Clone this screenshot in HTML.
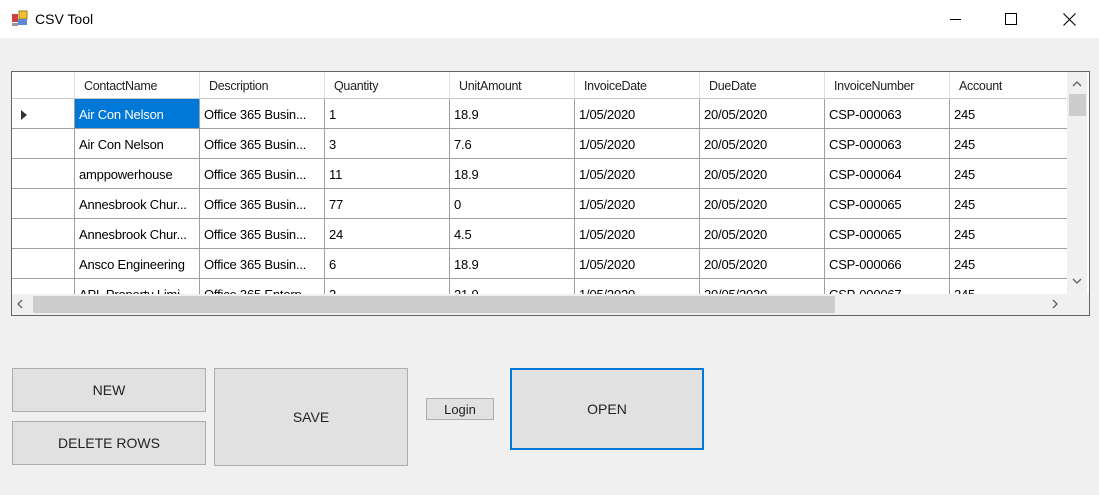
<!DOCTYPE html>
<html><head><style>
*{margin:0;padding:0;box-sizing:border-box}
body{width:1099px;height:495px;background:#f0f0f0;font-family:"Liberation Sans",sans-serif;font-size:13px;color:#000;position:relative;overflow:hidden}
.a{position:absolute}
.title{left:0;top:0;width:1099px;height:38px;background:#fff}
.grid{left:11px;top:71px;width:1079px;height:245px;border:1px solid #646464;background:#fff;overflow:hidden}
.cell{position:absolute;border-right:1px solid #a0a0a0;border-bottom:1px solid #a0a0a0;white-space:nowrap;overflow:hidden;padding-left:4px;line-height:31px;height:30px;font-size:13px;letter-spacing:-0.2px}
.hd{position:absolute;border-right:1px solid #e0e0e0;border-bottom:1px solid #c8c8c8;white-space:nowrap;padding-left:9px;line-height:28px;height:27px;font-size:12.5px;letter-spacing:-0.3px;color:#222}
.btn{position:absolute;background:#e1e1e1;border:1px solid #adadad;text-align:center;font-size:14px;color:#222}
</style></head><body>
<div class="a title">
 <svg class="a" style="left:11px;top:10px" width="17" height="17" viewBox="0 0 17 17"><rect x="1" y="4" width="6" height="8" fill="#d04040"/><rect x="8" y="1" width="8" height="8" fill="#f0c030" stroke="#a08020"/><rect x="7" y="9" width="9" height="6" fill="#5b8ad8"/><rect x="1" y="13" width="6" height="3" fill="#999"/></svg>
 <div class="a" style="left:35px;top:11px;font-size:14px">CSV Tool</div>
 <div class="a" style="left:950px;top:19px;width:11px;height:1px;background:#000"></div>
 <div class="a" style="left:1005px;top:13px;width:12px;height:12px;border:1px solid #000"></div>
 <svg class="a" style="left:1063px;top:13px" width="13" height="13"><path d="M0.5 0.5L12.5 12.5M12.5 0.5L0.5 12.5" stroke="#000" stroke-width="1.1"/></svg>
</div>
<div class="a grid">
 <div class="hd" style="left:0;top:0;width:63px"></div>
 <div class="hd" style="left:63px;top:0;width:125px">ContactName</div>
 <div class="hd" style="left:188px;top:0;width:125px">Description</div>
 <div class="hd" style="left:313px;top:0;width:125px">Quantity</div>
 <div class="hd" style="left:438px;top:0;width:125px">UnitAmount</div>
 <div class="hd" style="left:563px;top:0;width:125px">InvoiceDate</div>
 <div class="hd" style="left:688px;top:0;width:125px">DueDate</div>
 <div class="hd" style="left:813px;top:0;width:125px">InvoiceNumber</div>
 <div class="hd" style="left:938px;top:0;width:120px">Account</div>
 <div id="rows"></div>
 <div class="a" style="left:1055px;top:0;width:20px;height:222px;background:#f0f0f0"></div>
 <div class="a" style="left:1057px;top:22px;width:17px;height:22px;background:#cdcdcd"></div>
 <svg class="a" style="left:1060px;top:8px" width="10" height="8"><path d="M1 6L5 2L9 6" stroke="#606060" stroke-width="1.3" fill="none"/></svg>
 <svg class="a" style="left:1060px;top:205px" width="10" height="8"><path d="M1 2L5 6L9 2" stroke="#606060" stroke-width="1.3" fill="none"/></svg>
 <div class="a" style="left:0;top:222px;width:1077px;height:21px;background:#f0f0f0"></div>
 <div class="a" style="left:21px;top:224px;width:802px;height:17px;background:#cdcdcd"></div>
 <svg class="a" style="left:4px;top:227px" width="8" height="10"><path d="M6 1L2 5L6 9" stroke="#606060" stroke-width="1.3" fill="none"/></svg>
 <svg class="a" style="left:1039px;top:227px" width="8" height="10"><path d="M2 1L6 5L2 9" stroke="#606060" stroke-width="1.3" fill="none"/></svg>
</div>
<script>
var d=[["Air Con Nelson","Office 365 Busin...","1","18.9","CSP-000063"],["Air Con Nelson","Office 365 Busin...","3","7.6","CSP-000063"],["amppowerhouse","Office 365 Busin...","11","18.9","CSP-000064"],["Annesbrook Chur...","Office 365 Busin...","77","0","CSP-000065"],["Annesbrook Chur...","Office 365 Busin...","24","4.5","CSP-000065"],["Ansco Engineering","Office 365 Busin...","6","18.9","CSP-000066"],["APL Property Limi...","Office 365 Enterp...","2","21.9","CSP-000067"]];
var h="";
d.forEach(function(r,i){var t=27+i*30;
var v=["",r[0],r[1],r[2],r[3],"1/05/2020","20/05/2020",r[4],"245"];
var L=[0,63,188,313,438,563,688,813,938],W=[63,125,125,125,125,125,125,125,120];
for(var j=0;j<9;j++){var st="left:"+L[j]+"px;top:"+t+"px;width:"+W[j]+"px;";
if(i==0&&j==1)st+="background:#0078d7;color:#fff;";
h+='<div class="cell" style="'+st+'">'+v[j]+'</div>';}
});
h+='<svg class="a" style="left:9px;top:38px" width="6" height="10"><path d="M0 0L6 5L0 10Z" fill="#333"/></svg>';
document.getElementById("rows").innerHTML=h;
</script>
<div class="btn" style="left:12px;top:368px;width:194px;height:44px;line-height:42px">NEW</div>
<div class="btn" style="left:12px;top:421px;width:194px;height:44px;line-height:42px">DELETE ROWS</div>
<div class="btn" style="left:214px;top:368px;width:194px;height:98px;line-height:96px">SAVE</div>
<div class="btn" style="left:426px;top:398px;width:68px;height:22px;line-height:22px;font-size:13px">Login</div>
<div class="btn" style="left:510px;top:368px;width:194px;height:82px;line-height:78px;border:2px solid #0078d7">OPEN</div>
</body></html>
